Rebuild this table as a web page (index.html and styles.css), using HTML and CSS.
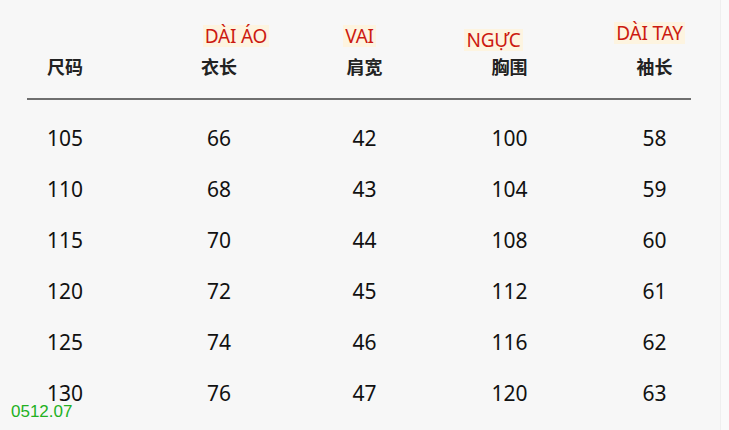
FILE: index.html
```html
<!DOCTYPE html>
<html lang="zh">
<head>
<meta charset="utf-8">
<title>尺码表</title>
<link rel="stylesheet" href="styles.css">
</head>
<body>
<div class="sheet">
  <div class="head">
    <div class="hcell first"><span class="zh">尺码</span></div>
    <div class="hcell"><span class="vn vn-dai-ao">DÀI ÁO</span><span class="zh">衣长</span></div>
    <div class="hcell"><span class="vn vn-vai">VAI</span><span class="zh">肩宽</span></div>
    <div class="hcell"><span class="vn vn-nguc">NGỰC</span><span class="zh">胸围</span></div>
    <div class="hcell"><span class="vn vn-dai-tay">DÀI TAY</span><span class="zh">袖长</span></div>
  </div>
  <div class="rule"></div>
  <div class="body">
    <div class="row"><span class="c first">105</span><span class="c">66</span><span class="c">42</span><span class="c">100</span><span class="c">58</span></div>
    <div class="row"><span class="c first">110</span><span class="c">68</span><span class="c">43</span><span class="c">104</span><span class="c">59</span></div>
    <div class="row"><span class="c first">115</span><span class="c">70</span><span class="c">44</span><span class="c">108</span><span class="c">60</span></div>
    <div class="row"><span class="c first">120</span><span class="c">72</span><span class="c">45</span><span class="c">112</span><span class="c">61</span></div>
    <div class="row"><span class="c first">125</span><span class="c">74</span><span class="c">46</span><span class="c">116</span><span class="c">62</span></div>
    <div class="row"><span class="c first">130</span><span class="c">76</span><span class="c">47</span><span class="c">120</span><span class="c">63</span></div>
  </div>
  <div class="stamp">0512.07</div>
</div>
</body>
</html>
```

FILE: styles.css
```css
html, body {
  margin: 0;
  padding: 0;
}

body {
  background: #fafafa;
  width: 729px;
  height: 430px;
  overflow: hidden;
}

.sheet {
  position: relative;
  width: 720px;
  height: 430px;
  background: #f7f7f7;
  border-right: 1px solid #efefef;
}

.head,
.row {
  display: grid;
  grid-template-columns: 98px 146px 145px 145px 145px;
  padding-left: 48px;
}

.head {
  height: 98px;
  align-items: end;
}

.hcell {
  display: flex;
  flex-direction: column;
  align-items: center;
  padding-bottom: 20px;
}

.hcell.first {
  align-items: flex-start;
  margin-left: -1px;
}

.zh {
  font-family: "Noto Sans CJK SC", "Noto Sans", sans-serif;
  font-weight: 700;
  font-size: 18px;
  line-height: 24px;
  color: #222;
}

.vn {
  font-family: "Noto Sans", "Open Sans", sans-serif;
  font-size: 19px;
  line-height: 22px;
  color: #cc1a10;
  background: #fdf4e0;
  padding: 0 2px;
  margin-bottom: 7px;
  letter-spacing: -0.2px;
}

.vn-dai-ao { transform: translate(17px, 0); }
.vn-vai { transform: translate(-5px, 0); }
.vn-nguc { transform: translate(-16px, 4px); }
.vn-dai-tay { transform: translate(-5px, -3px); }

.rule {
  margin-left: 27px;
  width: 664px;
  height: 2px;
  background: #6f6f6f;
}

.body {
  padding-top: 12px;
}

.row {
  height: 51px;
  align-items: center;
}

.c {
  font-family: "Noto Sans", "Open Sans", sans-serif;
  font-size: 21px;
  line-height: 24px;
  color: #111;
  text-align: center;
}

.c.first {
  text-align: left;
  margin-left: -1px;
}

.stamp {
  position: absolute;
  left: 11px;
  top: 405px;
  font-family: "Liberation Sans", Arial, sans-serif;
  font-size: 17px;
  line-height: 14px;
  color: #22b022;
}
```
